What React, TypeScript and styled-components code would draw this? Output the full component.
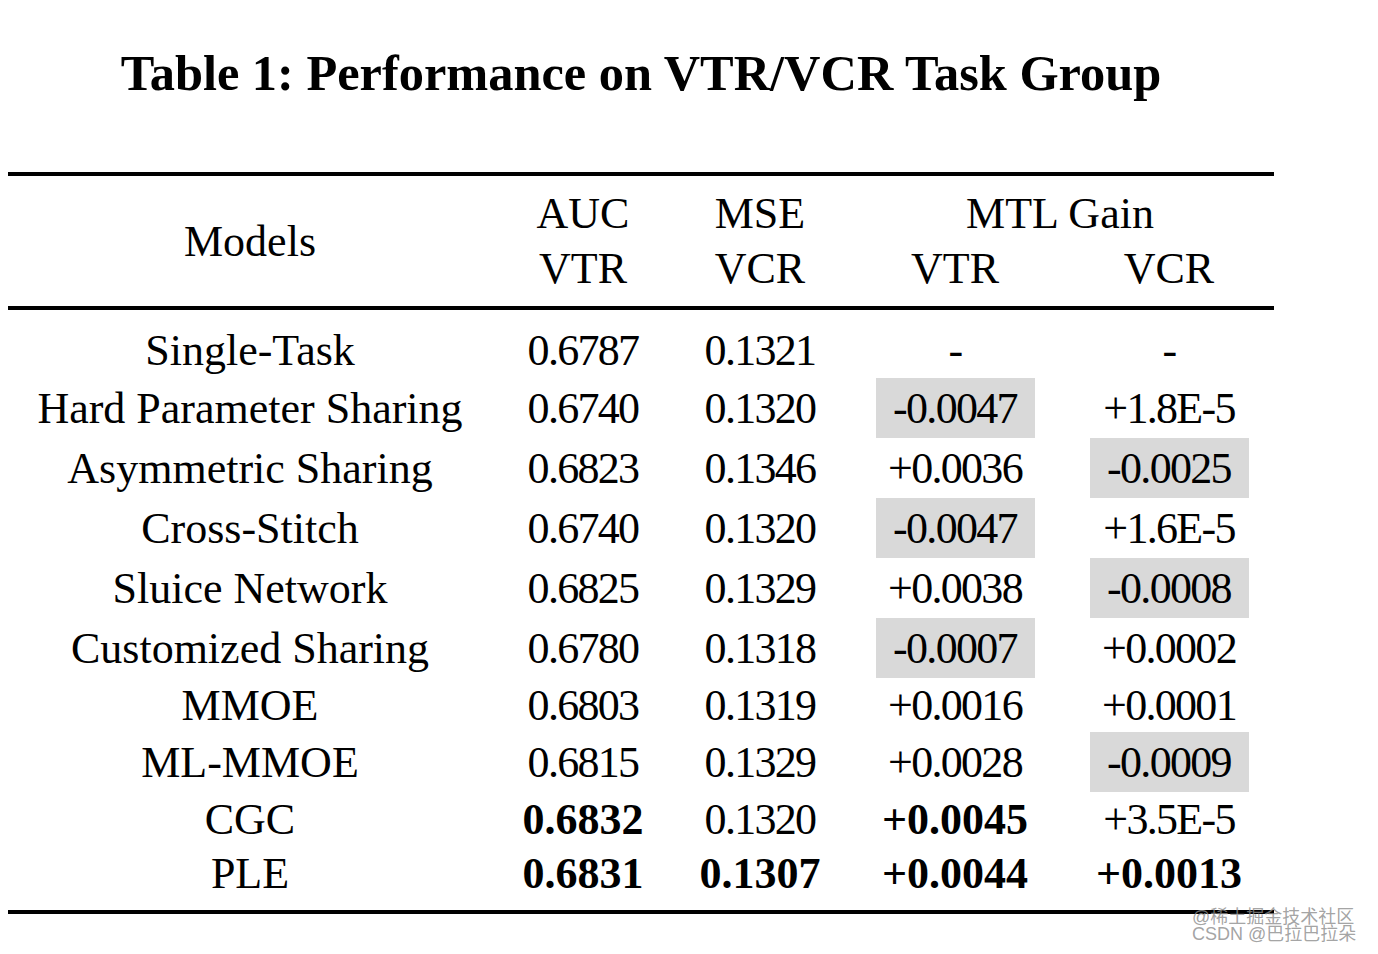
import React from "react";
import styled, { createGlobalStyle, css } from "styled-components";

const GlobalStyle = createGlobalStyle`
  html, body { margin: 0; padding: 0; background: #ffffff; }
  body { font-family: "Liberation Serif", "Times New Roman", serif; color: #000; }
`;

const Page = styled.div`
  position: relative;
  width: 1378px;
  height: 954px;
  padding-left: 8px;
  box-sizing: border-box;
  overflow: hidden;
`;

const Figure = styled.div`
  width: 1266px;
  display: flex;
  flex-direction: column;
`;

const Title = styled.h1`
  margin: 43px 0 0;
  height: 60px;
  line-height: 60px;
  font-size: 50.4px;
  font-weight: 700;
  text-align: center;
  font-family: "Liberation Serif", serif;
`;

const Rule = styled.div<{ $thick: number; $gap?: number }>`
  height: ${(p) => p.$thick}px;
  background: #000;
  margin-top: ${(p) => p.$gap ?? 0}px;
`;

const COLS = "484px 182px 172px 218px 210px";

const Header = styled.div`
  display: grid;
  grid-template-columns: ${COLS};
  grid-template-rows: 55px 55px;
  padding: 10px 0;
  font-size: 44px;
`;

const HeadCell = styled.div<{ $col: string; $row: string }>`
  grid-column: ${(p) => p.$col};
  grid-row: ${(p) => p.$row};
  display: flex;
  align-items: center;
  justify-content: center;
  line-height: 55px;
  white-space: nowrap;
`;

const Body = styled.div`
  display: flex;
  flex-direction: column;
  padding: 12px 0 10px;
`;

const Row = styled.div<{ $h: number }>`
  display: grid;
  grid-template-columns: ${COLS};
  height: ${(p) => p.$h}px;
  font-size: 44px;
`;

const Cell = styled.div`
  display: flex;
  align-items: center;
  justify-content: center;
  white-space: nowrap;
`;

const Value = styled.span<{ $bold?: boolean; $shade?: boolean }>`
  display: flex;
  align-items: center;
  justify-content: center;
  height: 100%;
  line-height: 55px;
  ${(p) =>
    p.$bold
      ? css`
          font-weight: 700;
          letter-spacing: 0;
        `
      : css`
          letter-spacing: -1.7px;
        `}
  ${(p) =>
    p.$shade &&
    css`
      width: 159px;
      background: #d9d9d9;
    `}
`;

const ModelName = styled.span`
  line-height: 55px;
`;

const Watermark = styled.div`
  position: absolute;
  left: 1192px;
  top: 909px;
  display: flex;
  flex-direction: column;
  font-family: "Liberation Sans", "Noto Sans CJK SC", sans-serif;
  font-size: 18px;
  color: rgba(140, 140, 140, 0.8);
  white-space: nowrap;
`;

const WatermarkLine = styled.span`
  display: block;
  height: 17px;
  line-height: 17px;
`;

type V = { t: string; b?: boolean; s?: boolean };
type R = { name: string; h: number; vals: V[] };

const rows: R[] = [
  { name: "Single-Task", h: 56, vals: [{ t: "0.6787" }, { t: "0.1321" }, { t: "-" }, { t: "-" }] },
  { name: "Hard Parameter Sharing", h: 60, vals: [{ t: "0.6740" }, { t: "0.1320" }, { t: "-0.0047", s: true }, { t: "+1.8E-5" }] },
  { name: "Asymmetric Sharing", h: 60, vals: [{ t: "0.6823" }, { t: "0.1346" }, { t: "+0.0036" }, { t: "-0.0025", s: true }] },
  { name: "Cross-Stitch", h: 60, vals: [{ t: "0.6740" }, { t: "0.1320" }, { t: "-0.0047", s: true }, { t: "+1.6E-5" }] },
  { name: "Sluice Network", h: 60, vals: [{ t: "0.6825" }, { t: "0.1329" }, { t: "+0.0038" }, { t: "-0.0008", s: true }] },
  { name: "Customized Sharing", h: 60, vals: [{ t: "0.6780" }, { t: "0.1318" }, { t: "-0.0007", s: true }, { t: "+0.0002" }] },
  { name: "MMOE", h: 54, vals: [{ t: "0.6803" }, { t: "0.1319" }, { t: "+0.0016" }, { t: "+0.0001" }] },
  { name: "ML-MMOE", h: 60, vals: [{ t: "0.6815" }, { t: "0.1329" }, { t: "+0.0028" }, { t: "-0.0009", s: true }] },
  { name: "CGC", h: 54, vals: [{ t: "0.6832", b: true }, { t: "0.1320" }, { t: "+0.0045", b: true }, { t: "+3.5E-5" }] },
  { name: "PLE", h: 54, vals: [{ t: "0.6831", b: true }, { t: "0.1307", b: true }, { t: "+0.0044", b: true }, { t: "+0.0013", b: true }] },
];

export default function App() {
  return (
    <>
      <GlobalStyle />
      <Page>
        <Figure>
          <Title>Table 1: Performance on VTR/VCR Task Group</Title>
          <Rule $thick={4} $gap={69} />
          <Header>
            <HeadCell $col="1" $row="1 / span 2">Models</HeadCell>
            <HeadCell $col="2" $row="1">AUC</HeadCell>
            <HeadCell $col="3" $row="1">MSE</HeadCell>
            <HeadCell $col="4 / span 2" $row="1">MTL Gain</HeadCell>
            <HeadCell $col="2" $row="2">VTR</HeadCell>
            <HeadCell $col="3" $row="2">VCR</HeadCell>
            <HeadCell $col="4" $row="2">VTR</HeadCell>
            <HeadCell $col="5" $row="2">VCR</HeadCell>
          </Header>
          <Rule $thick={4} />
          <Body>
            {rows.map((r) => (
              <Row key={r.name} $h={r.h}>
                <Cell>
                  <ModelName>{r.name}</ModelName>
                </Cell>
                {r.vals.map((v, i) => (
                  <Cell key={i}>
                    <Value $bold={v.b} $shade={v.s}>
                      {v.t}
                    </Value>
                  </Cell>
                ))}
              </Row>
            ))}
          </Body>
          <Rule $thick={4} />
        </Figure>
        <Watermark>
          <WatermarkLine>@稀土掘金技术社区</WatermarkLine>
          <WatermarkLine>CSDN @巴拉巴拉朵</WatermarkLine>
        </Watermark>
      </Page>
    </>
  );
}
